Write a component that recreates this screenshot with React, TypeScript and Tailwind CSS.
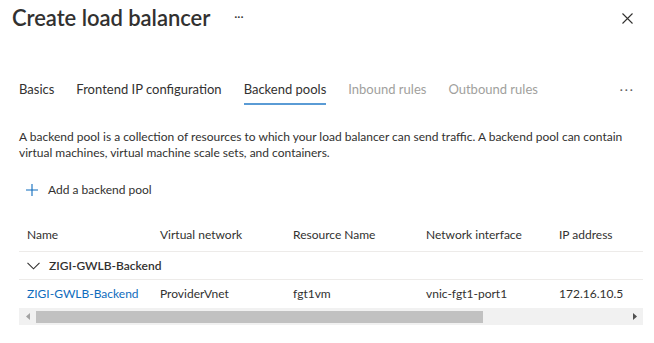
import React from 'react';

const cols = ['Name', 'Virtual network', 'Resource Name', 'Network interface', 'IP address'];

const App: React.FC = () => {
  return (
    <div className="w-[654px] h-[343px] bg-white overflow-hidden text-[#323130] font-['Lato','Open_Sans',sans-serif]">
      {/* Header */}
      <div className="flex items-center h-[36px] pl-[12px] pr-[21px]">
        <h1 className="text-[22px] leading-none font-semibold tracking-[-0.05px]">Create load balancer</h1>
        <span className="ml-[24px] text-[12px] leading-none mt-[-2px]">···</span>
        <svg className="ml-auto" width="11" height="11" viewBox="0 0 11 11" stroke="#323130" strokeWidth="1.1">
          <path d="M0.5 0.5l10 10M10.5 0.5l-10 10" />
        </svg>
      </div>

      {/* Tabs */}
      <div className="flex items-end h-[30px] mt-[39px] px-[19px] gap-[22px] text-[13px]">
        <div className="h-full flex items-center">Basics</div>
        <div className="h-full flex items-center">Frontend IP configuration</div>
        <div className="h-full flex flex-col justify-center relative">
          <span>Backend pools</span>
          <span className="absolute left-0 right-0 bottom-0 h-[2px] bg-[#5a9bd5]" />
        </div>
        <div className="h-full flex items-center text-[#a19f9d]">Inbound rules</div>
        <div className="h-full flex items-center text-[#a19f9d]">Outbound rules</div>
        <div className="h-full flex items-center ml-auto text-[#605e5c] tracking-[2px] text-[12px]">···</div>
      </div>

      {/* Description */}
      <p className="mt-[24px] px-[19px] text-[12px] leading-[16px]">
        A backend pool is a collection of resources to which your load balancer can send traffic. A backend pool can contain
        <br />
        virtual machines, virtual machine scale sets, and containers.
      </p>

      {/* Add */}
      <div className="flex items-center gap-[10px] mt-[19px] pl-[26px] h-[20px] text-[12px]">
        <svg width="12" height="12" viewBox="0 0 12 12" stroke="#0f6cbd" strokeWidth="1.1">
          <path d="M6 0v12M0 6h12" />
        </svg>
        <span>Add a backend pool</span>
      </div>

      {/* Table */}
      <div className="mx-[19px] mt-[20px] w-[624px] overflow-hidden text-[12px]">
        <div className="flex h-[32px] items-center pb-[1px] border-b border-[#edebe9]">
          {cols.map((c) => (
            <div key={c} className="w-[133px] shrink-0 pl-[8px]">{c}</div>
          ))}
        </div>
        <div className="flex h-[28px] items-center gap-[9px] pl-[8px] border-b border-[#edebe9] font-semibold">
          <svg width="13" height="8" viewBox="0 0 13 8" fill="none" stroke="#323130" strokeWidth="1.1">
            <path d="M0.5 0.8l6 6 6-6" />
          </svg>
          <span>ZIGI-GWLB-Backend</span>
        </div>
        <div className="flex h-[28px] items-center">
          <div className="w-[133px] shrink-0 pl-[8px] text-[#0f6cbd]">ZIGI-GWLB-Backend</div>
          <div className="w-[133px] shrink-0 pl-[8px]">ProviderVnet</div>
          <div className="w-[133px] shrink-0 pl-[8px]">fgt1vm</div>
          <div className="w-[133px] shrink-0 pl-[8px]">vnic-fgt1-port1</div>
          <div className="w-[133px] shrink-0 pl-[8px]">172.16.10.5</div>
        </div>
        {/* Scrollbar */}
        <div className="flex items-center h-[17px] bg-[#f1f1f1]">
          <div className="w-[17px] flex justify-center">
            <svg width="4" height="7" viewBox="0 0 4 7"><path d="M4 0v7L0 3.5z" fill="#a3a3a3" /></svg>
          </div>
          <div className="w-[447px] h-[12px] bg-[#c1c1c1]" />
          <div className="ml-auto w-[17px] flex justify-center">
            <svg width="4" height="7" viewBox="0 0 4 7"><path d="M0 0v7l4-3.5z" fill="#505050" /></svg>
          </div>
        </div>
      </div>
    </div>
  );
};

export default App;
